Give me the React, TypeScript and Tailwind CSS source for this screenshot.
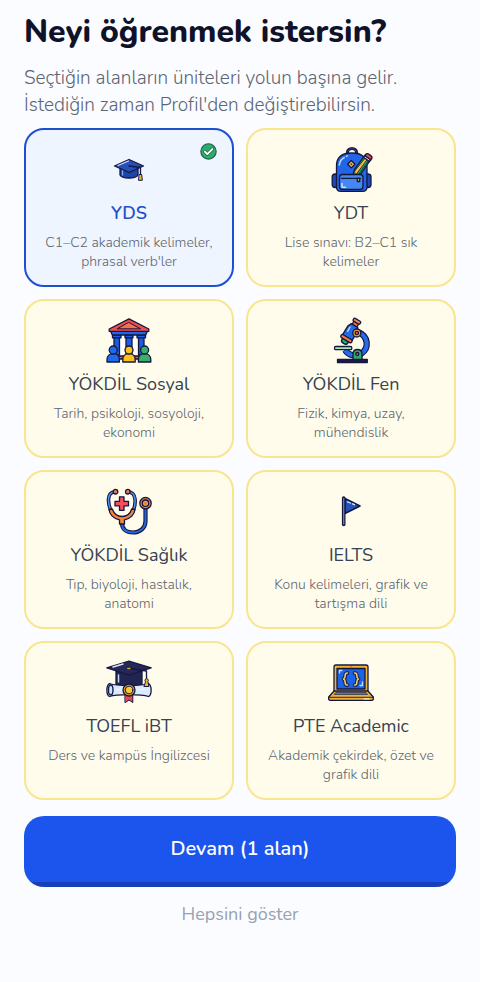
import { useState } from 'react';
import type { ReactNode } from 'react';
import clsx from 'clsx';

const INK = '#15173f';

function IconFrame({ children }: { children: ReactNode }) {
  return (
    <svg
      viewBox="0 0 48 48"
      className="size-12 shrink-0"
      fill="none"
      stroke={INK}
      strokeWidth="1.3"
      strokeLinecap="round"
      strokeLinejoin="round"
      aria-hidden="true"
    >
      {children}
    </svg>
  );
}

function CapIcon() {
  return (
    <IconFrame>
      <path d="M15 21v8c2 4 16 4 18 0v-8z" fill="#1e46a8" />
      <path d="M17.5 24v5" stroke="#7ea6f5" />
      <path d="M24 13.5 38.5 20 24 26.5 9.500 20z" fill="#2450b8" />
      <path d="m13 19.500 10.500-4.500" stroke="#c9dcff" />
      <path d="m24 20 11.500 1.500V29" />
      <path d="M34.500 28.500h2.200l.6 5.800h-3.400z" fill="#e9bd3a" strokeWidth="1" />
    </IconFrame>
  );
}

function BackpackIcon() {
  return (
    <IconFrame>
      <path d="M20.500 9V6.500a4.500 4 0 0 1 9 0V9" strokeWidth="3.200" />
      <path d="M20.500 9V6.500a4.500 4 0 0 1 9 0V9" stroke="#343a78" strokeWidth="1" />
      <rect x="5.200" y="28" width="8" height="13.500" rx="3" fill="#1b49b8" />
      <rect x="36" y="28" width="8" height="13.500" rx="3" fill="#1b49b8" />
      <path d="M9.500 20C9.500 11 15 7 24.800 7S40 11 40 20v21c0 3-1.500 4.300-4.500 4.300H14c-3 0-4.500-1.300-4.500-4.300z" fill="#2265e6" />
      <path d="M12.300 19c.4-3.500 2-6 5-7.500M19.500 10.200l1-.3" stroke="#b9d7ff" strokeWidth="1.500" />
      <path d="m24.300 14.500 3.700 3.700-3.700 3.700-3.700-3.700z" fill="#f3ae35" />
      <circle cx="24.300" cy="18.200" r=".8" fill={INK} stroke="none" />
      <path d="m26 29 1.500-5.500 9-12.300 6 4.300L33 29z" fill="#27a55c" />
      <path d="m27.800 25 10.200-12.800 2 1.500L29.500 28" fill="#f5bf45" strokeWidth=".8" />
      <path d="m32 28 9.300-12.800" strokeWidth=".8" />
      <path d="m36.500 11.200 1.300-1.700 6 4.300-1.300 1.700z" fill="#e8eefb" />
      <path d="m37.800 9.500 1-1.200c1.700-1.900 7.200 2 6 4.200l-1 1.300z" fill="#ef4453" />
      <rect x="12.500" y="28.500" width="23.500" height="15" rx="3" fill="#4688f3" />
      <path d="M14.500 32.300h19" />
      <path d="M30.300 32.300h2.400v3.200h-2.400z" fill="#e9bd3a" />
      <path d="M15 37.500v3.700h3.500" stroke="#c9e0ff" strokeWidth="1.500" />
    </IconFrame>
  );
}

function Person({ x, color }: { x: number; color: string }) {
  return (
    <g fill={color}>
      <path d={`M${x - 6.2} 45v-2.500c0-3.700 2.700-6 6.200-6s6.200 2.300 6.200 6V45z`} />
      <circle cx={x} cy="33" r="4" />
    </g>
  );
}

function MuseumIcon() {
  return (
    <IconFrame>
      <path d="M9 18h30v22H9z" fill="#fff" stroke="none" />
      <path d="M6 39h36v3H6z" fill="#ef4c5c" />
      <path d="M9 20h5.500v18H9zM21 20h6v18h-6zM33.500 20H39v18h-5.500z" fill="#1d5be0" />
      <path d="M7.500 17.800h8.500v3H7.500zM20 17.800h8v3h-8zM32 17.800h8.500v3H32z" fill="#1d5be0" />
      <path d="M5.500 14.200h37l-1.800 3.800H7.300z" fill="#2264e6" />
      <path d="M24 1.800 43.800 12v2.300H4.200V12z" fill="#ef4c50" />
      <path d="m24 5.500 11.500 6.300h-23z" fill="#f4714b" strokeWidth="1" />
      <Person x={8.2} color="#1c6bee" />
      <Person x={24} color="#f9c21c" />
      <Person x={39.6} color="#38b069" />
    </IconFrame>
  );
}

function MicroscopeIcon() {
  return (
    <IconFrame>
      <path d="M31 15c10 4 12 16 3 21.800-5 3.200-12 2-16-3.800" strokeWidth="6.300" strokeLinecap="butt" />
      <path d="M31 15c10 4 12 16 3 21.800-5 3.200-12 2-16-3.800" stroke="#246ce9" strokeWidth="4" strokeLinecap="butt" />
      <path d="M10.500 42.500h29.800v3H10.500z" fill="#1d1b50" />
      <path d="M26 42.300V37c0-3 1.500-4.500 4.500-4.500S35 34 35 37v5.300z" fill="#30aa68" />
      <circle cx="30.300" cy="37" r="1.500" fill="#ef714d" />
      <rect x="7.500" y="29.500" width="17.300" height="3.200" rx="1.200" fill="#a9e6bb" />
      <g transform="rotate(31 24 14)">
        <path d="M20.500 24.500h7V26c0 1.800-1 2.500-3.500 2.500s-3.500-.7-3.500-2.500z" fill="#2eb06b" />
        <path d="M21.500 4h5.500v4h-5.500z" fill="#ef714d" />
        <rect x="20" y="1" width="8" height="3.200" rx="1.200" fill="#f58a50" />
        <path d="M20.500 7.500h7.500l1.800 4v10H18.700v-10z" fill="#236ae8" />
        <path d="M21.200 11v5" stroke="#bad7ff" strokeWidth="1.400" />
        <rect x="17.800" y="21.200" width="12.500" height="3.400" rx="1.400" fill="#f47d43" />
      </g>
      <circle cx="29.800" cy="16" r="4" fill="#f7a62d" />
      <circle cx="29.800" cy="16" r="1.700" fill="#f06a4d" />
    </IconFrame>
  );
}

function StethoscopeIcon() {
  return (
    <IconFrame>
      <path d="M10 3.800C1 4.500 3 16 6 23M23 3.800C32 4.500 31 16 28 23" strokeWidth="3.600" />
      <path d="M10 3.800C1 4.500 3 16 6 23M23 3.800C32 4.500 31 16 28 23" stroke="#4d92f0" strokeWidth="1.500" />
      <path d="M17 35c0 6 4 9.500 11 9.500s12.500-4.500 12.500-11.500V21" strokeWidth="4.200" strokeLinecap="butt" />
      <path d="M17 35c0 6 4 9.500 11 9.500s12.500-4.500 12.500-11.500V21" stroke="#2268df" strokeWidth="2" strokeLinecap="butt" />
      <path d="M4 21.500 7.300 21c1.700 4.800 5 7.500 9.700 7.500s8.200-2.700 9.700-7.500l3.300.5c-.5 5-4.500 9.300-10.500 10.300V36h-5v-4.200C8.500 30.800 4.500 26.500 4 21.500z" fill="#f5843d" />
      <circle cx="10.500" cy="3.700" r="2.300" fill="#f47a48" />
      <circle cx="22.800" cy="3.700" r="2.300" fill="#f47a48" />
      <path d="M14.500 8.800h4.500v4.500h4.500v4.500H19v4.500h-4.500v-4.500H10v-4.500h4.500z" fill="#f24e60" />
      <circle cx="40.500" cy="15.200" r="5.700" fill="#f4813e" />
      <circle cx="40.500" cy="15.200" r="3.200" fill="#f6a047" />
      <circle cx="40.500" cy="15.200" r="1.300" fill="#ed754c" stroke="none" />
    </IconFrame>
  );
}

function FlagIcon() {
  return (
    <IconFrame>
      <path d="M18 10.500 33 18 18 25.500z" fill="#2052bd" strokeWidth="1.600" />
      <path d="m20.500 13.800 3 1.200M25.500 15.800l2 .9" stroke="#dce9ff" />
      <path d="M16.700 10v26.500" strokeWidth="3.600" />
      <path d="M16.700 10.500V36" stroke="#7886af" strokeWidth="1.200" />
    </IconFrame>
  );
}

function DiplomaIcon() {
  return (
    <IconFrame>
      <path d="M11 12v14c8 4 18 4 26 0V12z" fill="#222552" />
      <path d="M13.500 16v7" stroke="#cbd8f5" strokeWidth="1.500" />
      <path d="M1.800 8.800 24 2.200l22.200 6.600L24 16z" fill="#252856" />
      <path d="m8 8 10-3" stroke="#dce5ff" strokeWidth="1.500" />
      <path d="M26 9.500 41.500 12v8" stroke={INK} />
      <ellipse cx="24" cy="9.500" rx="2.200" ry="1.200" fill="#f0b92d" strokeWidth=".8" />
      <path d="M4.500 24.500c7 2.800 32 2.800 39 0 3.500 2 3.500 11.500 0 13-7-2.500-32-2.500-39 0-3.500-1.500-3.500-11 0-13z" fill="#dceaff" />
      <ellipse cx="5.700" cy="31" rx="2.300" ry="5" fill="#a8c9fa" />
      <path d="M6 28.500v5M11 30.500h6M31 30.500h8" stroke="#e9f2ff" />
      <path d="M20.300 35h7.500v8.500L24 41l-3.700 2.500z" fill="#ee4453" strokeWidth="1" />
      <circle cx="24" cy="31" r="6" fill="#dc9d22" />
      <circle cx="24" cy="31" r="3.800" fill="#fbc83a" strokeWidth="1" />
      <path d="M40.300 22.500a1.700 1.700 0 1 1 2.600 0l1 5h-4.600z" fill="#eeb92c" strokeWidth="1" />
    </IconFrame>
  );
}

function LaptopIcon() {
  return (
    <IconFrame>
      <rect x="7" y="6" width="34" height="27" rx="2" fill="#f0b635" />
      <rect x="10" y="9.500" width="28" height="20.500" fill="#1964e8" />
      <path d="M24 7.500h.1" stroke="#df493f" />
      <path d="M12.500 14v-2.500H15M35.500 23v3.500H33" stroke="#b9ddff" />
      <path d="M20.500 14c-4-.4-.8 5-4 6 3.200 1 0 6.400 4 6M27.500 14c4-.4.8 5 4 6-3.200 1 0 6.400-4 6" strokeWidth="3.600" />
      <path d="M20.500 14c-4-.4-.8 5-4 6 3.200 1 0 6.400 4 6M27.500 14c4-.4.8 5 4 6-3.200 1 0 6.400-4 6" stroke="#f1c767" strokeWidth="1.700" />
      <path d="M7 32h34l5.300 6v2.500l-1 .8H2.700l-1-.8V38z" fill="#eeb238" />
      <path d="M9 33.500h30l1.500 2h-33z" fill="#407cd3" strokeWidth=".6" />
      <path d="M2 38.300h44" strokeWidth=".9" />
      <path d="M37 39.800h5" stroke="#fff0b4" />
    </IconFrame>
  );
}

function CheckBadge() {
  return (
    <svg viewBox="0 0 17 17" className="absolute top-[13px] right-[15px] size-[17px]" fill="none" aria-hidden="true">
      <circle cx="8.500" cy="8.500" r="7.700" fill="#2dac68" stroke="#245b52" strokeWidth="1.100" />
      <path d="m4.800 8.600 2.500 2.500 5-5" stroke="#1d6849" strokeWidth="3.400" strokeLinecap="round" strokeLinejoin="round" />
      <path d="m4.800 8.600 2.500 2.500 5-5" stroke="#fff" strokeWidth="1.900" strokeLinecap="round" strokeLinejoin="round" />
    </svg>
  );
}

const AREAS = [
  { id: 'yds', title: 'YDS', description: "C1–C2 akademik kelimeler, phrasal verb'ler", Icon: CapIcon },
  { id: 'ydt', title: 'YDT', description: 'Lise sınavı: B2–C1 sık kelimeler', Icon: BackpackIcon },
  { id: 'sosyal', title: 'YÖKDİL Sosyal', description: 'Tarih, psikoloji, sosyoloji, ekonomi', Icon: MuseumIcon },
  { id: 'fen', title: 'YÖKDİL Fen', description: 'Fizik, kimya, uzay, mühendislik', Icon: MicroscopeIcon },
  { id: 'saglik', title: 'YÖKDİL Sağlık', description: 'Tıp, biyoloji, hastalık, anatomi', Icon: StethoscopeIcon },
  { id: 'ielts', title: 'IELTS', description: 'Konu kelimeleri, grafik ve tartışma dili', Icon: FlagIcon },
  { id: 'toefl', title: 'TOEFL iBT', description: 'Ders ve kampüs İngilizcesi', Icon: DiplomaIcon },
  { id: 'pte', title: 'PTE Academic', description: 'Akademik çekirdek, özet ve grafik dili', Icon: LaptopIcon },
];

export default function App() {
  const [selected, setSelected] = useState<string[]>(['yds']);

  const toggle = (id: string) => {
    setSelected((s) => (s.includes(id) ? s.filter((x) => x !== id) : [...s, id]));
  };

  return (
    <main lang="tr" className="min-h-screen bg-[#fafcff] px-6 pt-3 pb-14 font-[Nunito,Lato,'Open_Sans',sans-serif]">
      <h1 className="text-[32px] leading-10 font-extrabold text-[#0f1229]">Neyi öğrenmek istersin?</h1>
      <p className="mt-[13px] text-[19px] leading-[27px] font-light text-[#5d6471]">
        Seçtiğin alanların üniteleri yolun başına gelir. İstediğin zaman Profil'den değiştirebilirsin.
      </p>

      <div className="mt-[9px] grid grid-cols-2 gap-3">
        {AREAS.map(({ id, title, description, Icon }) => {
          const active = selected.includes(id);
          return (
            <button
              key={id}
              type="button"
              aria-pressed={active}
              onClick={() => toggle(id)}
              className={clsx(
                'relative flex flex-col items-center justify-start rounded-[20px] border-2 px-4 pt-4 pb-3.5 text-center',
                active ? 'border-[#1d4fd0] bg-[#eef5ff]' : 'border-[#fae58f] bg-[#fffceb]'
              )}
            >
              {active && <CheckBadge />}
              <Icon />
              <span
                className={clsx(
                  'mt-2 text-[18px] leading-[23px]',
                  active ? 'font-semibold text-[#1d4fd0]' : 'font-normal text-gray-700'
                )}
              >
                {title}
              </span>
              <span className="mt-2 text-[14px] leading-[19px] font-light text-[#5d6471]">{description}</span>
            </button>
          );
        })}
      </div>

      <button
        type="button"
        className="mt-4 block w-full rounded-[20px] bg-[linear-gradient(to_top,#173fb8_5px,#1b55ee_5px)] pt-5 pb-[25px] text-[20px] leading-[26px] font-semibold text-white"
      >
        Devam ({selected.length} alan)
      </button>
      <button type="button" className="mx-auto mt-[15px] block text-[18px] leading-6 font-normal text-gray-400">
        Hepsini göster
      </button>
    </main>
  );
}
